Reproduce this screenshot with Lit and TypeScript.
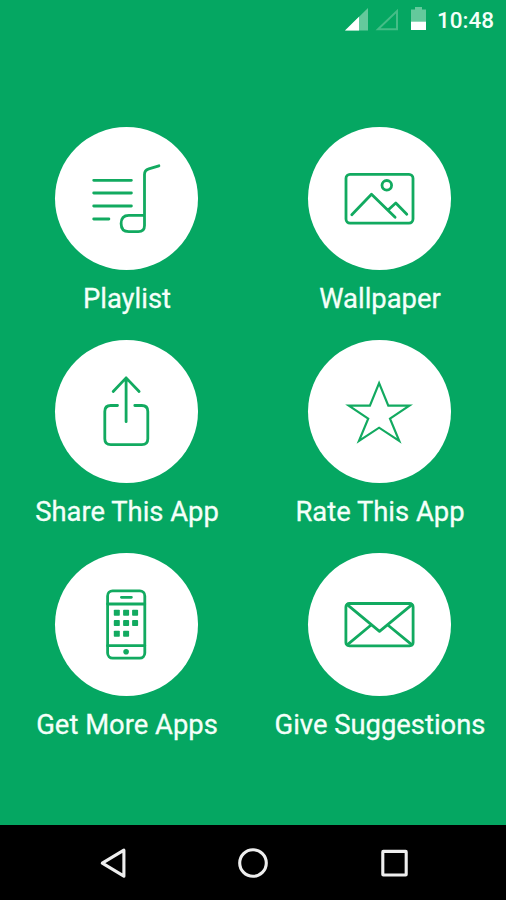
import { LitElement, html, svg, css } from "lit";
import { customElement } from "lit/decorators.js";

const playlist = svg`
  <path d="M38.9 52.8H76.6M38.9 65.5H76.6M38.9 78.5H76.6M38.9 91.5H54.1"/>
  <path d="M104.1 38.3L94 41.3Q89.7 42.6 89.7 47V98Q89.7 104.2 83.5 104.2H74Q66.3 104.2 66.3 96T74 87.8H89.7"/>`;

const wallpaper = svg`
  <rect x="38.2" y="46.8" width="67" height="48.8" rx="4"/>
  <circle cx="79" cy="57.8" r="4.8"/>
  <path d="M44 87.2L63.7 66.8L87.3 89.8M80.3 82.5L88 75.5L99 86.8"/>`;

const share = svg`
  <path d="M71.3 37.4V81.2M58.4 51L71.3 37.4L84.3 51"/>
  <path d="M62.7 65H56Q50 65 50 71V98.3Q50 104.2 56 104.2H87Q93 104.2 93 98.3V71Q93 65 87 65H80"/>`;

const star = svg`
  <path class="sharp" d="M71.3 42.6L80.5 65.2H101.6L82.2 78.2L91.4 100.4L71.3 87.2L51.2 100.4L60.4 78.2L41 65.2H62.1Z"/>`;

const appCells: Array<[number, number]> = [
  [62, 59.2], [71.3, 59.2], [80.3, 59.2],
  [62, 69.6], [71.3, 69.6], [80.3, 69.6],
  [62, 80.2], [71.3, 80.2],
];

const phone = svg`
  <rect x="52.8" y="37.4" width="37.2" height="67.2" rx="5"/>
  <path d="M52.8 50.5H90M52.8 92.2H90M66.6 43.8H76.6"/>
  <circle class="solid" cx="71.3" cy="98.3" r="2.8"/>
  ${appCells.map(([x, y]) => svg`<rect class="solid" x=${x - 3} y=${y - 3} width="6" height="6" rx="0.8"/>`)}`;

const envelope = svg`
  <rect x="38.1" y="50" width="67.2" height="42.4" rx="3.5"/>
  <path d="M39.4 51.2L71.7 77.8L104.2 51.2M39.4 91.4L63.3 71.5M104.2 91.4L80 71.5"/>`;

const entries = [
  { label: "Playlist", icon: playlist },
  { label: "Wallpaper", icon: wallpaper },
  { label: "Share This App", icon: share },
  { label: "Rate This App", icon: star },
  { label: "Get More Apps", icon: phone },
  { label: "Give Suggestions", icon: envelope },
];

@customElement("app-root")
export class AppRoot extends LitElement {
  static styles = css`
    :host {
      display: flex;
      flex-direction: column;
      height: 900px;
      background: #05a762;
      color: #f4fff9;
      font-family: Roboto, sans-serif;
      overflow: hidden;
    }
    .status {
      display: flex;
      justify-content: flex-end;
      align-items: center;
      height: 40px;
      padding-right: 12px;
      box-sizing: border-box;
      flex: none;
    }
    .signals { width: 82px; height: 40px; margin-right: 10px; }
    .clock { font-size: 22.5px; font-weight: 500; line-height: 40px; }
    .grid {
      flex: 1;
      display: grid;
      grid-template-columns: 1fr 1fr;
      grid-auto-rows: 213px;
      padding-top: 87px;
    }
    .entry { display: flex; flex-direction: column; align-items: center; }
    .disc {
      width: 143px;
      height: 143px;
      border-radius: 50%;
      background: #fff;
    }
    .disc svg {
      display: block;
      fill: none;
      stroke: #12aa60;
      stroke-width: 2.8;
      stroke-linecap: round;
      stroke-linejoin: round;
    }
    .disc .sharp { stroke-linejoin: miter; stroke-width: 2.2; }
    .disc .solid { fill: #12aa60; stroke: none; }
    .label {
      margin-top: 13px;
      padding-left: 1px;
      font-size: 27.4px;
      line-height: 32px;
      white-space: nowrap;
      -webkit-text-stroke: 0.3px #f4fff9;
    }
    .nav { flex: none; height: 75px; background: #000; }
    .nav svg { display: block; fill: none; stroke: #eee; stroke-width: 3.1; stroke-linejoin: round; }
  `;

  render() {
    return html`
      <div class="status">
        <svg class="signals" viewBox="345 0 82 40">
          <path d="M345 30.5L368 8V30.5Z" fill="#64c99c"/>
          <path d="M345 30.5L359 16.8V30.5Z" fill="#fff"/>
          <path d="M378 29.3L397 11V29.3Z" fill="none" stroke="#45bd87" stroke-width="2"/>
          <path d="M411 9.5H415V7H422V9.5H426V22H411Z" fill="#64c99c"/>
          <path d="M411 21.7H426V30H411Z" fill="#fff"/>
        </svg>
        <span class="clock">10:48</span>
      </div>
      <div class="grid">
        ${entries.map(
          (e) => html`<div class="entry">
            <div class="disc"><svg width="143" height="143" viewBox="0.2 -0.5 143 143">${e.icon}</svg></div>
            <div class="label">${e.label}</div>
          </div>`
        )}
      </div>
      <div class="nav">
        <svg width="506" height="75" viewBox="0 0 506 75">
          <path d="M102.3 38.2L123.9 25.2V51.2Z"/>
          <circle cx="253" cy="38" r="13.3"/>
          <rect x="382.8" y="26.4" width="23.4" height="23.6" rx="0.5"/>
        </svg>
      </div>
    `;
  }
}
